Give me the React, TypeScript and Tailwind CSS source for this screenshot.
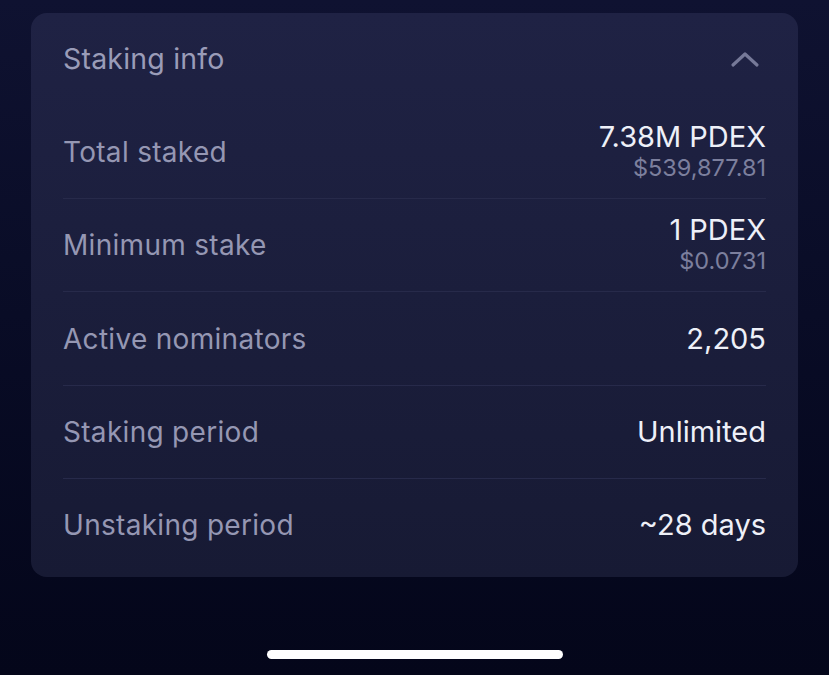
const rows = [
  { label: "Total staked", value: "7.38M PDEX", sub: "$539,877.81" },
  { label: "Minimum stake", value: "1 PDEX", sub: "$0.0731" },
  { label: "Active nominators", value: "2,205" },
  { label: "Staking period", value: "Unlimited" },
  { label: "Unstaking period", value: "~28 days" },
];

function ChevronUp() {
  return (
    <svg width="30" height="18" viewBox="0 0 30 18" fill="none">
      <path d="M3 15 L15 4 L27 15" stroke="#767998" strokeWidth="3.2" strokeLinecap="round" strokeLinejoin="round" />
    </svg>
  );
}

export default function App() {
  return (
    <div
      className="w-[829px] h-[675px] flex flex-col bg-gradient-to-b from-[#0f1231] to-[#04061a] overflow-hidden"
      style={{ fontFamily: "Inter, 'Noto Sans', sans-serif" }}
    >
      <div className="mx-[31px] mt-[13px] h-[564px] rounded-[16px] bg-gradient-to-b from-[#1f2244] to-[#171a34] px-[32px] pb-[6px] flex flex-col">
        <div className="h-[93px] flex items-center justify-between">
          <span className="text-[28.5px] text-[#9a9cb8] tracking-[0.2px]">Staking info</span>
          <div className="mr-[6px] mt-[-2px]">
            <ChevronUp />
          </div>
        </div>
        {rows.map((r, i) => (
          <div
            key={r.label}
            className={`flex-1 flex items-center justify-between ${i < rows.length - 1 ? "border-b border-[#272a4a]" : ""}`}
          >
            <span className="text-[28px] text-[#9597b3] tracking-[0.3px]">{r.label}</span>
            <div className="flex flex-col items-end">
              <span className="text-[29px] leading-[31px] text-[#eef0f8]">{r.value}</span>
              {r.sub && <span className="text-[23.5px] leading-[31px] text-[#7c7f9d]">{r.sub}</span>}
            </div>
          </div>
        ))}
      </div>
      <div className="flex-1" />
      <div className="mx-auto mb-[16px] w-[296px] h-[9px] rounded-full bg-white" />
    </div>
  );
}
